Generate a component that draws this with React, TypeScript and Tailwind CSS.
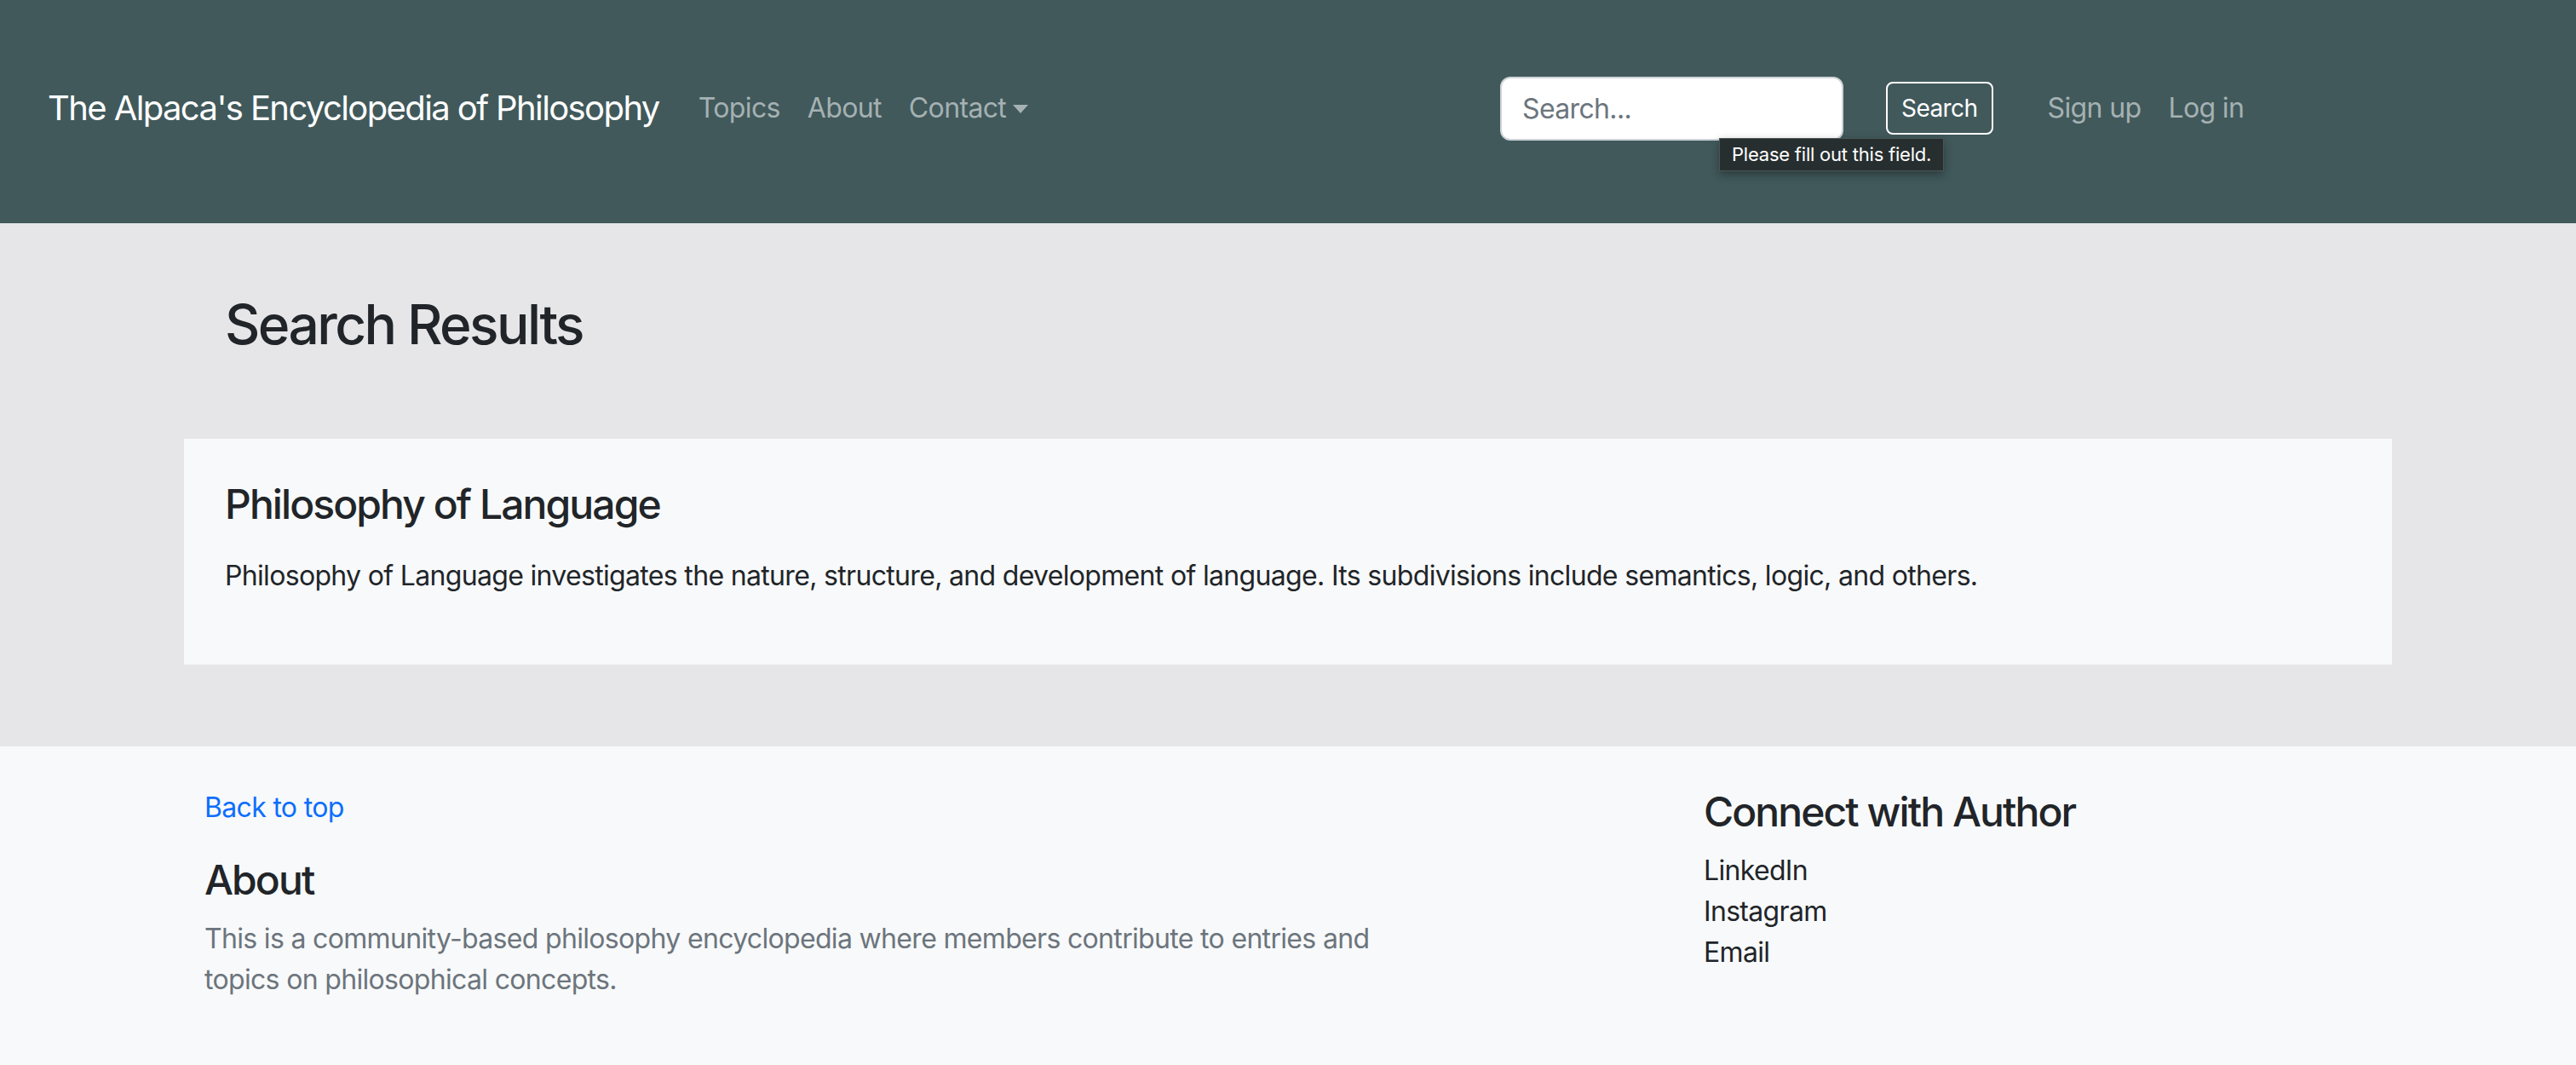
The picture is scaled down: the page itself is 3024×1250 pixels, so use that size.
import React from 'react';

const NavLink: React.FC<{ children: React.ReactNode }> = ({ children }) => (
  <a href="#" className="px-[16px] text-[32px] leading-[48px] tracking-[-0.02em] text-[#a5b1b2] flex items-center">
    {children}
  </a>
);

const App: React.FC = () => {
  return (
    <div className="min-h-screen bg-[#f8f9fa] font-['Inter',sans-serif] text-[#212529]">
      {/* Top navbar */}
      <nav className="h-[262px] bg-[#41595b] flex items-center pb-[8px]">
        <div className="w-[1761px] pl-[56px] flex items-center">
          <a href="#" className="text-[40px] leading-[60px] tracking-[-0.04em] text-white mr-[30px]">
            The Alpaca's Encyclopedia of Philosophy
          </a>
          <div className="flex items-center">
            <NavLink>Topics</NavLink>
            <NavLink>About</NavLink>
            <NavLink>
              Contact
              <span className="ml-[8px] mt-[2px] w-0 h-0 border-l-[9px] border-r-[9px] border-t-[10px] border-l-transparent border-r-transparent border-t-[#a5b1b2]" />
            </NavLink>
          </div>
        </div>

        {/* Search form */}
        <form className="relative flex items-center" onSubmit={(e) => e.preventDefault()}>
          <input
            type="search"
            placeholder="Search..."
            className="w-[403px] h-[75px] rounded-[12px] border-2 border-[#ced4da] bg-white px-[24px] text-[32px] tracking-[-0.02em] text-[#212529] placeholder:text-[#6c757d] outline-none"
          />
          <button
            type="submit"
            className="ml-[50px] h-[62px] px-[16px] rounded-[8px] border-2 border-white text-white text-[28px] leading-[42px] tracking-[-0.02em]"
          >
            Search
          </button>
          {/* Validation bubble */}
          <div className="absolute left-[257px] top-[72px] h-[39px] px-[14px] flex items-center bg-[#262e2f] border border-[#4d5556] shadow-[0_4px_10px_rgba(0,0,0,0.35)] text-white text-[22px] tracking-[-0.01em] whitespace-nowrap">
            Please fill out this field.
          </div>
        </form>

        <div className="flex items-center ml-[48px]">
          <NavLink>Sign up</NavLink>
          <NavLink>Log in</NavLink>
        </div>
      </nav>

      {/* Search results */}
      <main className="bg-[#e6e6e8] pt-[81px] pb-[96px]">
        <div className="w-[2592px] mx-auto">
          <h2 className="px-[48px] text-[64px] leading-[1.2] tracking-[-0.04em] font-medium">Search Results</h2>
          <div className="mt-[95px] bg-[#f8f9fa] px-[48px] pt-[48px] pb-[48px]">
            <h3 className="text-[48px] leading-[1.2] tracking-[-0.04em] font-medium mb-[32px]">Philosophy of Language</h3>
            <p className="text-[32px] leading-[1.5] tracking-[-0.021em] mb-[32px]">
              Philosophy of Language investigates the nature, structure, and development of language. Its subdivisions include semantics, logic, and others.
            </p>
          </div>
        </div>
      </main>

      {/* Footer */}
      <footer className="bg-[#f8f9fa] pt-[48px] pb-[80px]">
        <div className="flex pl-[240px]">
          <div className="w-[1760px]">
            <a href="#" className="block text-[32px] leading-[1.5] tracking-[-0.021em] text-[#0d6efd]">Back to top</a>
            <h4 className="mt-[32px] text-[48px] leading-[1.2] tracking-[-0.04em] font-medium">About</h4>
            <p className="mt-[16px] w-[1440px] text-[32px] leading-[1.5] tracking-[-0.021em] text-[#6c757d]">
              This is a community-based philosophy encyclopedia where members contribute to entries and topics on philosophical concepts.
            </p>
          </div>
          <div>
            <h4 className="text-[48px] leading-[1.2] tracking-[-0.04em] font-medium">Connect with Author</h4>
            <ul className="mt-[16px] text-[32px] leading-[1.5] tracking-[-0.021em]">
              <li>LinkedIn</li>
              <li>Instagram</li>
              <li>Email</li>
            </ul>
          </div>
        </div>
      </footer>
    </div>
  );
};

export default App;
